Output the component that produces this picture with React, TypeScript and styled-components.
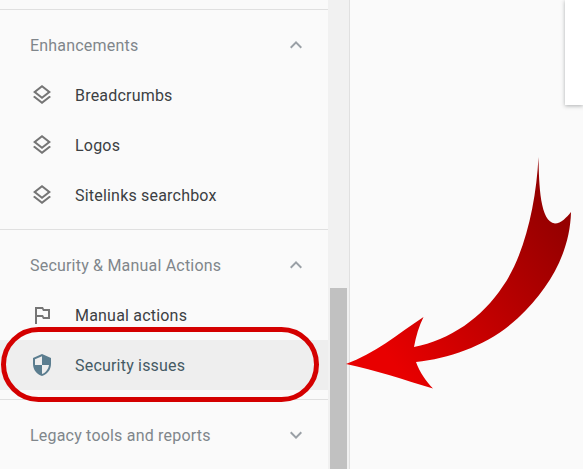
import React from "react";
import { FC } from "react";
import styled, { createGlobalStyle } from "styled-components";
import { MdExpandLess, MdExpandMore, MdOutlineLayers, MdOutlinedFlag, MdSecurity } from "react-icons/md";

type ItemProps = {
    icon: React.ReactNode
    label: string
    active?: boolean
}

const NavItem: FC<ItemProps> = ({icon, label, active}) => {
    return (
        <Item $active={active}>
            <ItemIcon $active={active}>{icon}</ItemIcon>
            <ItemLabel $active={active}>{label}</ItemLabel>
        </Item>
    )
}

const Arrow: FC = () => {
    return (
        <ArrowSvg viewBox="340 150 240 245">
            <defs>
                <linearGradient id="arrowFill" gradientUnits="userSpaceOnUse" x1="566" y1="232" x2="392" y2="362">
                    <stop offset="0" stopColor="#960000" />
                    <stop offset="1" stopColor="#e80000" />
                </linearGradient>
            </defs>
            <path
                fill="url(#arrowFill)"
                d="M538.5 157 C539 185 540 222 555 223.500 C561 223.500 567 217 571 212 C570 252 550 288 518 318 C490 344 452 358 416 362 C420 373 426 381 433 388.500 C404 380 376 370 346 364 C374 354 398 334 423.500 317 C419 326 416 336 414 347 C450 340 482 318 503 286 C524 256 536 205 538.500 157 Z"
            />
        </ArrowSvg>
    )
}

const App: FC = () => {
    return (
        <Page>
            <GlobalStyle />
            <Sidebar>
                <TopRule />
                <Section>
                    <SectionHeader>
                        <SectionTitle>Enhancements</SectionTitle>
                        <Chevron><MdExpandLess /></Chevron>
                    </SectionHeader>
                    <NavItem icon={<MdOutlineLayers />} label="Breadcrumbs" />
                    <NavItem icon={<MdOutlineLayers />} label="Logos" />
                    <NavItem icon={<MdOutlineLayers />} label="Sitelinks searchbox" />
                </Section>
                <Section>
                    <SectionHeader>
                        <SectionTitle>Security &amp; Manual Actions</SectionTitle>
                        <Chevron><MdExpandLess /></Chevron>
                    </SectionHeader>
                    <NavItem icon={<MdOutlinedFlag />} label="Manual actions" />
                    <NavItem icon={<MdSecurity />} label="Security issues" active />
                </Section>
                <Section>
                    <SectionHeader>
                        <SectionTitle>Legacy tools and reports</SectionTitle>
                        <Chevron><MdExpandMore /></Chevron>
                    </SectionHeader>
                </Section>
            </Sidebar>
            <Scrollbar>
                <Thumb />
            </Scrollbar>
            <Main>
                <Card />
            </Main>
            <Highlight />
            <Arrow />
        </Page>
    )
}

const GlobalStyle = createGlobalStyle`
    html, body {
        margin: 0;
        padding: 0;
        background-color: #fafafa;
    }
`

const Page = styled.div`
    position: relative;
    display: flex;
    flex-direction: row;
    width: 583px;
    height: 469px;
    overflow: hidden;
    background-color: #fafafa;
    font-family: Roboto, "Liberation Sans", sans-serif;
`

const Sidebar = styled.nav`
    display: flex;
    flex-direction: column;
    flex: 0 0 328px;
    width: 328px;
`

const TopRule = styled.div`
    flex: 0 0 9px;
    border-bottom: 1px solid #e0e0e0;
`

const Section = styled.section`
    display: flex;
    flex-direction: column;
    flex: none;
    padding: 10px 0 9px;
    border-bottom: 1px solid #e0e0e0;
    &:last-child {
        border-bottom: none;
    }
`

const SectionHeader = styled.div`
    display: flex;
    flex-direction: row;
    align-items: center;
    justify-content: space-between;
    height: 50px;
    padding: 0 20px 0 30px;
`

const SectionTitle = styled.div`
    color: #80868b;
    font-weight: 400;
    font-size: 16px;
    letter-spacing: 0.2px;
`

const Chevron = styled.div`
    display: flex;
    color: #9aa0a6;
    font-size: 24px;
`

const Item = styled.div<{ $active?: boolean }>`
    display: flex;
    flex-direction: row;
    align-items: center;
    height: 50px;
    padding-left: 30px;
    background-color: ${({$active}) => $active ? "#eeeeee" : "transparent"};
`

const ItemIcon = styled.div<{ $active?: boolean }>`
    display: flex;
    margin-right: 21px;
    font-size: 24px;
    color: ${({$active}) => $active ? "#5b7d8f" : "#757575"};
`

const ItemLabel = styled.div<{ $active?: boolean }>`
    color: ${({$active}) => $active ? "#455a64" : "#3c4043"};
    font-weight: 400;
    font-size: 16px;
    letter-spacing: 0.2px;
`

const Scrollbar = styled.div`
    display: flex;
    flex-direction: column;
    justify-content: flex-end;
    flex: 0 0 22px;
    box-sizing: border-box;
    padding-left: 2px;
    padding-right: 2px;
    background-color: #f1f1f1;
    border-right: 1px solid #e0e0e0;
`

const Thumb = styled.div`
    height: 181px;
    background-color: #c1c1c1;
`

const Main = styled.main`
    display: flex;
    flex: 1;
    justify-content: flex-end;
    align-items: flex-start;
`

const Card = styled.div`
    width: 18px;
    height: 105px;
    background-color: #ffffff;
    box-shadow: 0 1px 4px rgba(60, 64, 67, 0.4);
`

const Highlight = styled.div`
    position: absolute;
    left: 1px;
    top: 327px;
    width: 318px;
    height: 75px;
    box-sizing: border-box;
    border: 5px solid #d40000;
    border-radius: 38px;
`

const ArrowSvg = styled.svg`
    position: absolute;
    left: 340px;
    top: 150px;
    width: 240px;
    height: 245px;
`

export default App;
